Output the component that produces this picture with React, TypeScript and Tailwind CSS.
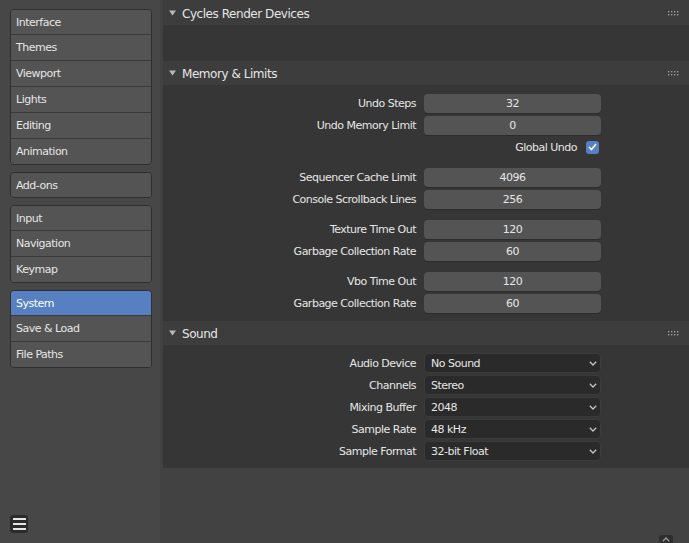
const navGroups: string[][] = [
  ["Interface", "Themes", "Viewport", "Lights", "Editing", "Animation"],
  ["Add-ons"],
  ["Input", "Navigation", "Keymap"],
  ["System", "Save & Load", "File Paths"],
];

function NavGroup({ items }: { items: string[] }) {
  return (
    <div className="overflow-hidden rounded-[4px] border border-[#2f2f2f]">
      {items.map((item, i) => (
        <div
          key={item}
          className={
            (i === 0 ? "h-[24px] " : "h-[26px] border-t border-[#3a3a3a] ") +
            "flex items-center pl-[5px] pt-[2px] " +
            (item === "System" ? "bg-[#5680c2] text-white" : "bg-[#545454] text-[#e6e6e6]")
          }
        >
          {item}
        </div>
      ))}
    </div>
  );
}

function Grip() {
  return (
    <svg width="11" height="5" viewBox="0 0 11 5">
      {[0, 3, 6, 9].map((x) =>
        [0, 3].map((y) => <rect key={`${x}-${y}`} x={x} y={y} width="1.4" height="1.4" fill="#9a9a9a" />)
      )}
    </svg>
  );
}

function PanelHeader({ title, first }: { title: string; first?: boolean }) {
  return (
    <div
      className={
        (first ? "h-[25px] pt-[1px] " : "h-[24px] ") +
        "flex items-center bg-[#3d3d3d] pl-[6px] pr-[10px]"
      }
    >
      <svg width="7" height="6" viewBox="0 0 7 6" className="mr-[6px]">
        <path d="M0 0.5 L7 0.5 L3.5 5.5 Z" fill="#b8b8b8" />
      </svg>
      <span className="pt-[1px] text-[12px] tracking-[-0.45px] text-[#e6e6e6]">{title}</span>
      <div className="ml-auto">
        <Grip />
      </div>
    </div>
  );
}

function Row({ label, children }: { label?: string; children: React.ReactNode }) {
  return (
    <div className="flex h-[22px] items-center">
      <div className="w-[261px] pr-[8px] pt-[2px] text-right text-[#e6e6e6]">{label}</div>
      <div className="w-[177px]">{children}</div>
    </div>
  );
}

function NumField({ value }: { value: string }) {
  return (
    <div className="flex h-[19px] items-center justify-center rounded-[4px] bg-[#545454] pt-[2px] text-[#e6e6e6] shadow-[0_1px_0_#2c2c2c]">
      {value}
    </div>
  );
}

function Dropdown({ value }: { value: string }) {
  return (
    <div className="flex h-[20px] items-center rounded-[4px] border border-[#3b3b3b] bg-[#2a2a2a] pl-[6px] pr-[3px] text-[#e6e6e6]">
      <span className="pt-[2px]">{value}</span>
      <svg width="8" height="5" viewBox="0 0 8 5" className="ml-auto">
        <path d="M0.8 0.8 L4 4 L7.2 0.8" fill="none" stroke="#c4c4c4" strokeWidth="1.3" />
      </svg>
    </div>
  );
}

export default function App() {
  return (
    <div className="flex h-[543px] w-[689px] overflow-hidden bg-[#424242] font-['DejaVu_Sans',sans-serif] text-[11px] tracking-[-0.5px]">
      <div className="flex w-[160px] flex-col bg-[#474747] pl-[10px] pr-[8px] pt-[9px] pb-[10px]">
        <div className="flex flex-col gap-[7px]">
          {navGroups.map((g, i) => (
            <NavGroup key={i} items={g} />
          ))}
        </div>
        <div className="mt-auto flex h-[18px] w-[18px] flex-col items-center justify-center gap-[3px] rounded-[3px] bg-[#2c2c2c]">
          <div className="h-[2px] w-[13px] bg-[#e6e6e6]" />
          <div className="h-[2px] w-[13px] bg-[#e6e6e6]" />
          <div className="h-[2px] w-[13px] bg-[#e6e6e6]" />
        </div>
      </div>

      <div className="relative flex-1 pl-[3px]">
        <PanelHeader title="Cycles Render Devices" first />
        <div className="h-[36px] bg-[#363636]" />

        <PanelHeader title="Memory & Limits" />
        <div className="flex flex-col bg-[#363636] pt-[7px] pb-[7px]">
          <Row label="Undo Steps">
            <NumField value="32" />
          </Row>
          <Row label="Undo Memory Limit">
            <NumField value="0" />
          </Row>
          <Row>
            <div className="flex items-center justify-end gap-[9px] pr-[2px] text-[#e6e6e6]">
              <span className="pt-[2px]">Global Undo</span>
              <div className="flex h-[13px] w-[13px] items-center justify-center rounded-[3px] bg-[#5680c2]">
                <svg width="9" height="8" viewBox="0 0 9 8">
                  <path d="M1 4 L3.5 6.5 L8 1" fill="none" stroke="#ffffff" strokeWidth="1.6" />
                </svg>
              </div>
            </div>
          </Row>
          <div className="h-[8px]" />
          <Row label="Sequencer Cache Limit">
            <NumField value="4096" />
          </Row>
          <Row label="Console Scrollback Lines">
            <NumField value="256" />
          </Row>
          <div className="h-[8px]" />
          <Row label="Texture Time Out">
            <NumField value="120" />
          </Row>
          <Row label="Garbage Collection Rate">
            <NumField value="60" />
          </Row>
          <div className="h-[8px]" />
          <Row label="Vbo Time Out">
            <NumField value="120" />
          </Row>
          <Row label="Garbage Collection Rate">
            <NumField value="60" />
          </Row>
        </div>

        <PanelHeader title="Sound" />
        <div className="flex flex-col bg-[#363636] pt-[7px] pb-[6px]">
          <Row label="Audio Device">
            <Dropdown value="No Sound" />
          </Row>
          <Row label="Channels">
            <Dropdown value="Stereo" />
          </Row>
          <Row label="Mixing Buffer">
            <Dropdown value="2048" />
          </Row>
          <Row label="Sample Rate">
            <Dropdown value="48 kHz" />
          </Row>
          <Row label="Sample Format">
            <Dropdown value="32-bit Float" />
          </Row>
        </div>

        <div className="absolute bottom-0 right-[16px] flex h-[8px] w-[14px] items-center justify-center rounded-t-[3px] bg-[#2e2e2e]">
          <svg width="8" height="5" viewBox="0 0 8 5">
            <path d="M0.8 4.2 L4 1 L7.2 4.2" fill="none" stroke="#9a9a9a" strokeWidth="1.3" />
          </svg>
        </div>
      </div>
    </div>
  );
}
